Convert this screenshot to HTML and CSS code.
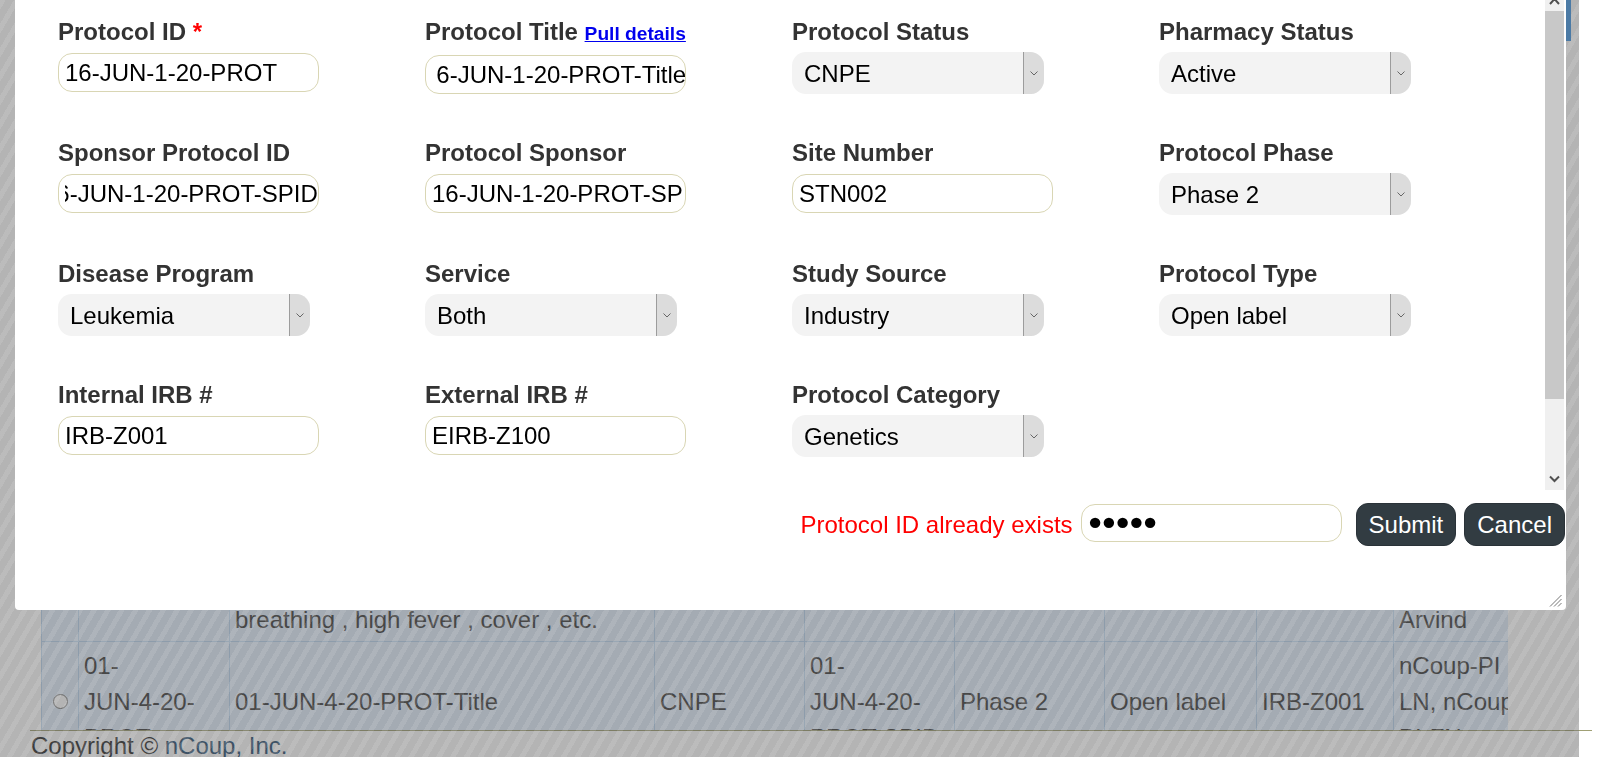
FILE: index.html
```html
<!DOCTYPE html>
<html lang="en">
<head>
<meta charset="utf-8">
<title>Protocol</title>
<link rel="stylesheet" href="styles.css">
</head>
<body>
<div class="page">
  <div class="content">
    <table class="grid">
      <colgroup>
        <col class="c1"><col class="c2"><col class="c3"><col class="c4"><col class="c5"><col class="c6"><col class="c7"><col class="c8"><col class="c9">
      </colgroup>
      <tr class="row-a">
        <td></td><td></td><td>breathing , high fever , cover , etc.</td><td></td><td></td><td></td><td></td><td></td><td>Arvind</td>
      </tr>
      <tr class="row-b">
        <td class="sel"><input type="radio" name="pick"></td>
        <td>01-<br>JUN-4-20-<br>PROT</td>
        <td>01-JUN-4-20-PROT-Title</td>
        <td>CNPE</td>
        <td>01-<br>JUN-4-20-<br>PROT-SPID</td>
        <td>Phase 2</td>
        <td>Open label</td>
        <td>IRB-Z001</td>
        <td class="nowrap">nCoup-PI<br>LN, nCoup-<br>PI-FN</td>
      </tr>
    </table>
  </div>
  <footer class="footer">Copyright © <a class="footer-link" href="#">nCoup, Inc.</a></footer>
</div>

<div class="overlay"></div>
<div class="edge-strip"></div>

<div class="dialog">
  <div class="dialog-body">
    <form class="form">
      <div class="field">
        <label class="label">Protocol ID <span class="req">*</span></label>
        <input class="text" type="text" value="16-JUN-1-20-PROT">
      </div>
      <div class="field">
        <label class="label">Protocol Title <a class="pull" href="#">Pull details</a></label>
        <input class="text title" type="text" value="16-JUN-1-20-PROT-Title">
      </div>
      <div class="field">
        <label class="label">Protocol Status</label>
        <div class="select"><select><option>CNPE</option></select><span class="arrow"><svg width="8" height="5" viewBox="0 0 8 5"><polyline points="0.5,0.5 4,4 7.5,0.5" fill="none" stroke="#666" stroke-width="1"/></svg></span></div>
      </div>
      <div class="field">
        <label class="label">Pharmacy Status</label>
        <div class="select"><select><option>Active</option></select><span class="arrow"><svg width="8" height="5" viewBox="0 0 8 5"><polyline points="0.5,0.5 4,4 7.5,0.5" fill="none" stroke="#666" stroke-width="1"/></svg></span></div>
      </div>

      <div class="field">
        <label class="label">Sponsor Protocol ID</label>
        <input class="text" type="text" value="16-JUN-1-20-PROT-SPID" data-scroll="end">
      </div>
      <div class="field">
        <label class="label">Protocol Sponsor</label>
        <input class="text sponsor" type="text" value="16-JUN-1-20-PROT-SPONSOR">
      </div>
      <div class="field">
        <label class="label">Site Number</label>
        <input class="text" type="text" value="STN002">
      </div>
      <div class="field">
        <label class="label">Protocol Phase</label>
        <div class="select"><select><option>Phase 2</option></select><span class="arrow"><svg width="8" height="5" viewBox="0 0 8 5"><polyline points="0.5,0.5 4,4 7.5,0.5" fill="none" stroke="#666" stroke-width="1"/></svg></span></div>
      </div>

      <div class="field">
        <label class="label">Disease Program</label>
        <div class="select"><select><option>Leukemia</option></select><span class="arrow"><svg width="8" height="5" viewBox="0 0 8 5"><polyline points="0.5,0.5 4,4 7.5,0.5" fill="none" stroke="#666" stroke-width="1"/></svg></span></div>
      </div>
      <div class="field">
        <label class="label">Service</label>
        <div class="select"><select><option>Both</option></select><span class="arrow"><svg width="8" height="5" viewBox="0 0 8 5"><polyline points="0.5,0.5 4,4 7.5,0.5" fill="none" stroke="#666" stroke-width="1"/></svg></span></div>
      </div>
      <div class="field">
        <label class="label">Study Source</label>
        <div class="select"><select><option>Industry</option></select><span class="arrow"><svg width="8" height="5" viewBox="0 0 8 5"><polyline points="0.5,0.5 4,4 7.5,0.5" fill="none" stroke="#666" stroke-width="1"/></svg></span></div>
      </div>
      <div class="field">
        <label class="label">Protocol Type</label>
        <div class="select"><select><option>Open label</option></select><span class="arrow"><svg width="8" height="5" viewBox="0 0 8 5"><polyline points="0.5,0.5 4,4 7.5,0.5" fill="none" stroke="#666" stroke-width="1"/></svg></span></div>
      </div>

      <div class="field">
        <label class="label">Internal IRB #</label>
        <input class="text" type="text" value="IRB-Z001">
      </div>
      <div class="field">
        <label class="label">External IRB #</label>
        <input class="text" type="text" value="EIRB-Z100">
      </div>
      <div class="field">
        <label class="label">Protocol Category</label>
        <div class="select"><select><option>Genetics</option></select><span class="arrow"><svg width="8" height="5" viewBox="0 0 8 5"><polyline points="0.5,0.5 4,4 7.5,0.5" fill="none" stroke="#666" stroke-width="1"/></svg></span></div>
      </div>
    </form>
    <div class="vscroll">
      <div class="sb-up"><svg width="19" height="11" viewBox="0 0 19 11"><polyline points="5,4 9.5,-1 14,4" fill="none" stroke="#505050" stroke-width="2"/></svg></div>
      <div class="sb-thumb"></div>
      <div class="sb-track"></div>
      <div class="sb-down"><svg width="19" height="20" viewBox="0 0 19 20"><polyline points="5,6.5 9.5,11 14,6.5" fill="none" stroke="#505050" stroke-width="2"/></svg></div>
    </div>
  </div>
  <div class="buttonpane">
    <span class="error">Protocol ID already exists</span>
    <input class="text pw" type="password" value="abcde">
    <button class="btn submit" type="button">Submit</button>
    <button class="btn" type="button">Cancel</button>
  </div>
  <span class="resize"><svg width="13" height="13" viewBox="0 0 13 13"><line x1="12.5" y1="1" x2="1" y2="12.5" stroke="#777" stroke-width="1"/><line x1="12.5" y1="5" x2="5" y2="12.5" stroke="#777" stroke-width="1"/><line x1="12.5" y1="9" x2="9" y2="12.5" stroke="#777" stroke-width="1"/></svg></span>
</div>
<script src="app.js"></script>
</body>
</html>
```

FILE: styles.css
```css
* { box-sizing: border-box; }

html, body {
  margin: 0;
  padding: 0;
  background: #fff;
  font-family: "Liberation Sans", Arial, sans-serif;
  overflow: hidden;
}

.page {
  width: 1600px;
  height: 757px;
}

.content {
  width: 1508px;
  height: 730px;
  overflow: hidden;
  padding: 595px 0 0 41px;
}

.grid {
  border-collapse: collapse;
  table-layout: fixed;
  width: 1519px;
  font-size: 24px;
  line-height: 36px;
  color: #444;
  background: #e4f0fe;
}

.grid col.c1 { width: 37px; }
.grid col.c2 { width: 151px; }
.grid col.c3 { width: 425px; }
.grid col.c4 { width: 150px; }
.grid col.c5 { width: 150px; }
.grid col.c6 { width: 150px; }
.grid col.c7 { width: 152px; }
.grid col.c8 { width: 137px; }
.grid col.c9 { width: 167px; }

.grid td {
  border: 1px solid #bcd6f0;
  padding: 6px 5px;
  vertical-align: middle;
  white-space: nowrap;
  overflow: hidden;
}

.grid .row-a td {
  padding-bottom: 3px;
  vertical-align: bottom;
}

.grid td.sel {
  text-align: center;
  padding: 0;
}

.grid td.sel input {
  margin: 0 0 4px 0;
  width: 15px;
  height: 15px;
  vertical-align: middle;
}

.footer {
  margin-left: 30px;
  width: 1562px;
  border-top: 1px solid #a0a075;
  padding-left: 1px;
  font-size: 24px;
  line-height: 30px;
  color: #333;
}

.footer-link {
  color: #335678;
  text-decoration: none;
}

.overlay {
  position: fixed;
  left: 0;
  top: 0;
  width: 1579px;
  height: 100%;
  background-color: rgba(77, 77, 77, 0.42);
  background-image: repeating-linear-gradient(120deg, rgba(255, 255, 255, 0.1) 0 5px, rgba(255, 255, 255, 0) 5px 12px);
}

.edge-strip {
  position: fixed;
  left: 1566px;
  top: 0;
  width: 5px;
  height: 41px;
  background: #4b7aa5;
}

.dialog {
  position: absolute;
  left: 15px;
  top: 0;
  width: 1551px;
  height: 610px;
  background: #fff;
  border-radius: 0 0 4px 4px;
  padding-right: 1px;
  display: flex;
  flex-direction: column;
}

.dialog-body {
  height: 490px;
  display: flex;
  overflow: hidden;
  margin-right: 1px;
}

.form {
  flex: 1;
  margin: 0;
  padding: 18px 0 0 43px;
  display: grid;
  grid-template-columns: repeat(4, 367px);
  row-gap: 45px;
  align-content: start;
}

.field {
  display: flex;
  flex-direction: column;
  align-items: flex-start;
}

.label {
  font-weight: bold;
  font-size: 24px;
  line-height: 28px;
  color: #333;
  margin-bottom: 6px;
  white-space: nowrap;
}

.req { color: #f00; }

.pull {
  font-size: 19.2px;
  color: #0000ee;
  text-decoration: underline;
}

.text {
  width: 261px;
  height: 39px;
  margin: 1px 0 0 0;
  border: 1px solid #d9d6b4;
  border-radius: 14px;
  padding: 0 0 0 6px;
  background: #fff;
  font-family: "Liberation Sans", Arial, sans-serif;
  font-size: 24px;
  color: #000;
  outline: none;
}

.text.title {
  text-indent: -13px;
  padding-left: 10px;
}

.text.sponsor { padding-right: 3px; }

.select {
  position: relative;
  width: 252px;
  height: 42px;
  border-radius: 14px;
  overflow: hidden;
  background: #f3f3f3;
}

.select select {
  -webkit-appearance: none;
  appearance: none;
  width: 100%;
  height: 100%;
  border: none;
  background: transparent;
  padding: 0 0 0 12px;
  font-family: "Liberation Sans", Arial, sans-serif;
  font-size: 24px;
  color: #000;
  outline: none;
}

.arrow {
  position: absolute;
  right: 0;
  top: 0;
  bottom: 0;
  width: 21px;
  background: #dcdcdc;
  border-left: 1px solid #9c9c9c;
  display: flex;
  align-items: center;
  justify-content: center;
  pointer-events: none;
}

.arrow svg { display: block; margin-right: 1px; }

.vscroll {
  width: 19px;
  display: flex;
  flex-direction: column;
  background: #f0f0f0;
}

.sb-up { height: 11px; overflow: hidden; }
.sb-up svg, .sb-down svg { display: block; }
.sb-thumb { height: 388px; background: #c8c8c8; }
.sb-track { flex: 1; }
.sb-down { height: 20px; }

.buttonpane {
  display: flex;
  justify-content: flex-end;
  align-items: center;
  height: 43px;
  margin-top: 13px;
}

.error {
  color: #f00;
  font-size: 24px;
  margin-right: 8px;
}

.pw {
  margin: 0 14px 3px 0;
  height: 38px;
  padding-left: 3px;
  font-family: "DejaVu Sans", sans-serif;
  font-size: 36px;
  letter-spacing: -7.5px;
}

.btn {
  height: 43px;
  padding: 0 12px;
  background: #323c42;
  color: #fff;
  border: 1px solid #2a3238;
  border-radius: 12px;
  font-family: "Liberation Sans", Arial, sans-serif;
  font-size: 24px;
}

.btn.submit { margin-right: 8px; }

.resize {
  position: absolute;
  right: 4px;
  bottom: 3px;
  width: 13px;
  height: 13px;
}

.resize svg { display: block; }
```

FILE: app.js
```js
document.querySelectorAll('[data-scroll]').forEach(function (el) {
  var v = el.getAttribute('data-scroll');
  el.scrollLeft = v === 'end' ? el.scrollWidth : parseFloat(v);
});
```
